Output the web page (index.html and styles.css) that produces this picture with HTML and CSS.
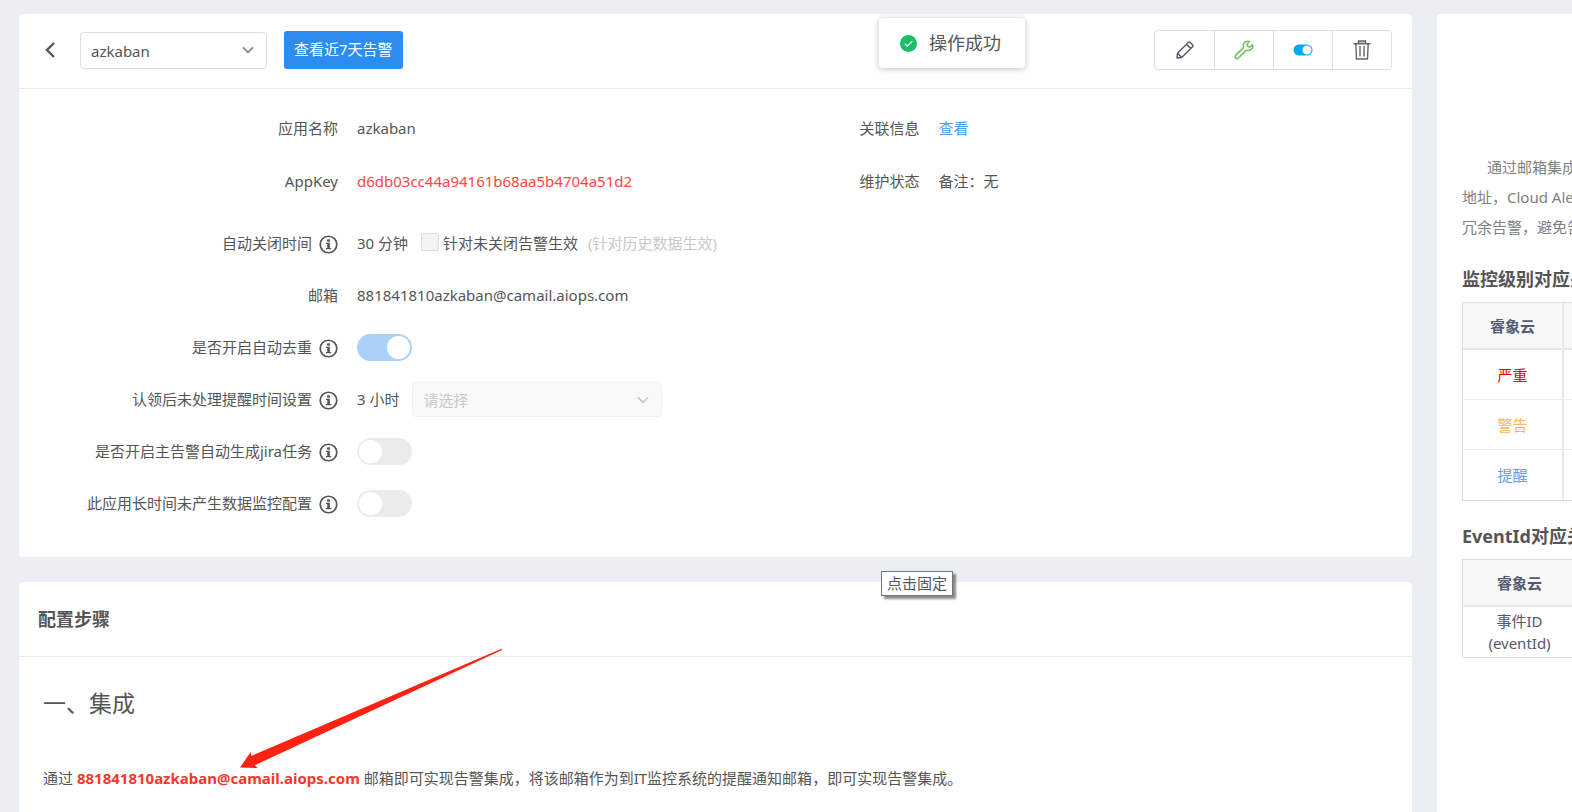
FILE: index.html
```html
<!DOCTYPE html>
<html lang="zh-CN">
<head>
<meta charset="utf-8">
<title>azkaban</title>
<link rel="stylesheet" href="styles.css">
</head>
<body>
<svg class="sprite" aria-hidden="true">
  <symbol id="info" viewBox="0 0 20 20">
    <circle cx="10" cy="10" r="8.7" fill="none" stroke="currentColor" stroke-width="1.8"/>
    <path d="M8.600 4.600h2.800v2.400H8.600zM7.400 8.200h4v5.400h1.500v1.400H7.400v-1.400h1.300V9.600H7.400z" fill="currentColor"/>
  </symbol>
  <symbol id="chevron" viewBox="0 0 12 8">
    <path d="M1 1.3l5 5 5-5" fill="none" stroke="currentColor" stroke-width="1.8"/>
  </symbol>
</svg>

<div class="page">
  <main class="main">
    <section class="card">
      <header class="toolbar">
        <button class="back" type="button" aria-label="返回">
          <svg width="10" height="16" viewBox="0 0 10 16"><path d="M9 1L2 8l7 7" fill="none" stroke="currentColor" stroke-width="2.4"/></svg>
        </button>
        <div class="select select-app">
          <select aria-label="应用"><option>azkaban</option></select>
          <svg class="arrow"><use href="#chevron"/></svg>
        </div>
        <button class="primary" type="button">查看近7天告警</button>
        <div class="actions">
          <button type="button" aria-label="编辑">
            <svg width="18" height="18" viewBox="0 0 18 18" fill="none" stroke="#515a6e" stroke-width="1.4" stroke-linejoin="round"><path d="M1 17l.5-4.700L12.300 1.500q1-1 2 0l2.200 2.200q1 1 0 2L5.700 16.500z M10.500 3.300l4.200 4.200 M1.500 12.300l4.200 4.200"/></svg>
          </button>
          <button type="button" aria-label="维护">
            <svg width="20" height="20" viewBox="0 0 20 20" fill="none" stroke="#76c160" stroke-width="1.600" stroke-linejoin="round"><path d="M15.300 1.600c-3-1.200-6.400 1.200-5.900 4.400.2 1.300 0 2-.8 2.700l-6.800 6.500c-2 2 .8 4.700 2.800 2.800l6.700-6.900c.8-.8 1.500-1 2.700-.8 3.300.4 5.700-2.700 4.500-5.700l-2.300 2.200c-.5.500-1.200.5-1.700 0l-1.200-1.200c-.5-.5-.5-1.200 0-1.700z"/></svg>
          </button>
          <button type="button" aria-label="停用">
            <svg width="20" height="12" viewBox="0 0 20 12"><rect x=".5" y=".5" width="19" height="11" rx="5.500" fill="#03a9f4"/><circle cx="14" cy="6" r="4.500" fill="#fff"/></svg>
          </button>
          <button type="button" aria-label="删除">
            <svg width="18" height="20" viewBox="0 0 18 20" fill="none" stroke="#606672" stroke-width="1.400"><path d="M5.500 3.500V1h7v2.500" fill="#c8cad0"/><path d="M.5 3.700h17M2.800 3.700l.7 15.300h11l.7-15.300M7 6v10.500M11 6v10.500"/></svg>
          </button>
        </div>
      </header>

      <div class="details">
        <dl class="basic">
          <dt>应用名称</dt><dd>azkaban</dd>
          <dt>关联信息</dt><dd><a href="#">查看</a></dd>
          <dt>AppKey</dt><dd class="key">d6db03cc44a94161b68aa5b4704a51d2</dd>
          <dt>维护状态</dt><dd>备注：无</dd>
        </dl>
        <dl class="settings">
          <dt>自动关闭时间<svg class="info"><use href="#info"/></svg></dt>
          <dd>30 分钟
            <input class="tick" id="apply" type="checkbox" disabled><label for="apply">针对未关闭告警生效</label>
            <span class="hint">(针对历史数据生效)</span></dd>
          <dt>邮箱</dt><dd>881841810azkaban@camail.aiops.com</dd>
          <dt><label for="dedupe">是否开启自动去重</label><svg class="info"><use href="#info"/></svg></dt>
          <dd><input class="switch" id="dedupe" type="checkbox" checked disabled></dd>
          <dt><label for="remind">认领后未处理提醒时间设置</label><svg class="info"><use href="#info"/></svg></dt>
          <dd>3 小时
            <div class="select select-remind">
              <select id="remind" disabled><option>请选择</option></select>
              <svg class="arrow"><use href="#chevron"/></svg>
            </div></dd>
          <dt><label for="jira">是否开启主告警自动生成jira任务</label><svg class="info"><use href="#info"/></svg></dt>
          <dd><input class="switch" id="jira" type="checkbox" disabled></dd>
          <dt><label for="idle">此应用长时间未产生数据监控配置</label><svg class="info"><use href="#info"/></svg></dt>
          <dd><input class="switch" id="idle" type="checkbox" disabled></dd>
        </dl>
      </div>
    </section>

    <section class="card steps">
      <h2>配置步骤</h2>
      <div class="steps-body">
        <h3>一、集成</h3>
        <p>通过 <strong>881841810azkaban@camail.aiops.com</strong> 邮箱即可实现告警集成，将该邮箱作为到IT监控系统的提醒通知邮箱，即可实现告警集成。</p>
      </div>
    </section>
  </main>

  <aside class="side">
    <p>通过邮箱集成<br>地址，Cloud Aler<br>冗余告警，避免告</p>
    <h4>监控级别对应关</h4>
    <table class="levels">
      <thead><tr><th>睿象云</th><th></th></tr></thead>
      <tbody>
        <tr><td class="critical">严重</td><td></td></tr>
        <tr><td class="warning">警告</td><td></td></tr>
        <tr><td class="notice">提醒</td><td></td></tr>
      </tbody>
    </table>
    <h4>EventId对应关</h4>
    <table class="events">
      <thead><tr><th>睿象云</th><th></th></tr></thead>
      <tbody><tr><td>事件ID<br>(eventId)</td><td></td></tr></tbody>
    </table>
  </aside>
</div>

<div class="toast" role="status">
  <svg width="17" height="17" viewBox="0 0 17 17"><circle cx="8.500" cy="8.500" r="8.500" fill="#19be6b"/><path d="M4.800 8.700l2.500 2.500 5-5" fill="none" stroke="#fff" stroke-width="1.200"/></svg>
  操作成功
</div>
<div class="tooltip" role="tooltip">点击固定</div>
<svg class="pointer" viewBox="0 0 264 122" aria-hidden="true"><path d="M261.500.8L11.300 108l-.6-4L0 119.500l17.700.5-3-2.700L262 2z" fill="#ff2213"/></svg>
</body>
</html>
```
FILE: styles.css
```css
* { box-sizing: border-box; }

body {
  margin: 0;
  height: 100vh;
  overflow: hidden;
  background: #ebeff4;
  color: #555;
  font: 15px/22px "Noto Sans", "Noto Sans CJK SC", sans-serif;
}

button, select { font: inherit; color: inherit; }
h2, h3, h4, p, dl, dd { margin: 0; }
a { color: #4a9dfa; text-decoration: none; }
.sprite { display: none; }

.page {
  display: flex;
  gap: 25px;
  min-height: 100vh;
  padding: 14px 0 0 19px;
}

.main {
  flex: 1;
  min-width: 0;
  display: flex;
  flex-direction: column;
  gap: 25px;
}

.card { background: #fff; border-radius: 4px; }

.toolbar {
  display: flex;
  align-items: center;
  height: 75px;
  padding: 0 20px 2px 21px;
  border-bottom: 1px solid #e8eaec;
}

.back {
  width: 20px;
  height: 24px;
  margin-right: 20px;
  padding: 0;
  border: 0;
  background: none;
  line-height: 0;
}

.select { position: relative; }

.select select {
  appearance: none;
  width: 100%;
  height: 100%;
  padding: 2px 10px 0;
  border: 1px solid #dcdee2;
  border-radius: 4px;
  background: #fff;
}

.select .arrow {
  position: absolute;
  right: 13px;
  top: 14px;
  width: 12px;
  height: 8px;
  color: #808695;
  pointer-events: none;
}

.select-app { width: 187px; height: 37px; margin-right: 17px; }
.select-remind { width: 250px; height: 35px; margin-left: 13px; }
.select-remind select { border-color: #f0f0f0; background: #f9f9f9; color: #c5c8ce; opacity: 1; }
.select-remind .arrow { color: #c5c8ce; }

.primary {
  height: 38px;
  padding: 0 10px 2px;
  border: 0;
  border-radius: 3px;
  background: #2d8cf0;
  color: #fff;
}

.actions {
  display: flex;
  margin-left: auto;
  border: 1px solid #dcdee2;
  border-radius: 4px;
}

.actions button {
  display: flex;
  align-items: center;
  justify-content: center;
  width: 59px;
  height: 38px;
  padding: 0;
  border: 0;
  background: none;
}

.actions button + button { border-left: 1px solid #dcdee2; }

.details { padding: 12px 0 28px; }

.basic, .settings {
  display: grid;
  grid-template-columns: 319px 1fr;
  grid-auto-rows: 52px;
  column-gap: 19px;
}

.basic {
  grid-template-columns: 319px 1fr auto 34%;
  grid-auto-rows: 53px;
  margin-bottom: 10px;
}

dt, dd { display: flex; align-items: center; white-space: nowrap; }
dt { justify-content: flex-end; }
.key { color: #ff4740; }
.info { width: 19px; height: 19px; margin: 3px 0 0 7px; }

.tick {
  appearance: none;
  width: 18px;
  height: 18px;
  margin: 0 4px 2px 13px;
  border: 1px solid #dcdee2;
  border-radius: 2px;
  background: #f3f3f3;
}

.hint { margin-left: 10px; color: #c8c8c8; }

.switch {
  appearance: none;
  width: 55px;
  height: 27px;
  margin: 0;
  padding: 2px;
  border-radius: 14px;
  background: #ebebeb;
}

.switch::before {
  content: "";
  display: block;
  width: 23px;
  height: 23px;
  border-radius: 50%;
  background: #fff;
}

.switch:checked { background: #abd1f9; }
.switch:checked::before { margin-left: auto; }

.steps { flex: 1; border-radius: 4px 4px 0 0; }

.steps h2 {
  padding: 26px 19px;
  border-bottom: 1px solid #e8eaec;
  font-size: 18px;
  line-height: 22px;
}

.steps-body { padding: 30px 24px; }
.steps h3 { margin-bottom: 48px; font-size: 23px; font-weight: 400; line-height: 32px; }
.steps p { white-space: nowrap; }
.steps strong { color: #f5382c; }

.side {
  flex: 0 0 135px;
  overflow: hidden;
  padding: 138px 0 0 25px;
  border-radius: 4px 0 0;
  background: #fff;
  white-space: nowrap;
}

.side p { color: #808080; line-height: 30px; text-indent: 25px; }
.side h4 { margin: 26px 0 12px; font-size: 18px; line-height: 22px; }
.side .levels + h4 { margin-top: 24px; }

.side table {
  width: 300px;
  table-layout: fixed;
  border: 1px solid #dcdee2;
  border-right: 0;
  border-spacing: 0;
  color: #515a6e;
  text-align: center;
}

.side th { height: 47px; padding: 0; border-bottom: 2px solid #e8e8e8; background: #f8f8f9; }
.side td { height: 50px; padding: 0; border-bottom: 1px solid #e8eaec; }
.side tr:last-child td { border-bottom: 0; }
.levels th:first-child { width: 101px; }
.levels th:first-child, .levels td:first-child { border-right: 2px solid #e8e8e8; }
.events th:first-child { width: 113px; }
.side .critical { color: #f00; }
.side .warning { color: #ffb55c; }
.side .notice { color: #5ca0fa; }

.toast {
  position: absolute;
  top: 18px;
  left: 879px;
  display: flex;
  align-items: center;
  gap: 12px;
  padding: 13px 24px 13px 21px;
  border-radius: 4px;
  background: #fff;
  box-shadow: 0 1px 6px rgba(0, 0, 0, .25);
  font-size: 18px;
  line-height: 24px;
}

.tooltip {
  position: absolute;
  top: 571px;
  left: 881px;
  padding: 0 5px 1px;
  border: 1px solid #767676;
  background: #fff;
  box-shadow: 3px 3px 2px rgba(0, 0, 0, .45);
}

.pointer {
  position: absolute;
  top: 648px;
  left: 240px;
  width: 264px;
  height: 122px;
}
```
